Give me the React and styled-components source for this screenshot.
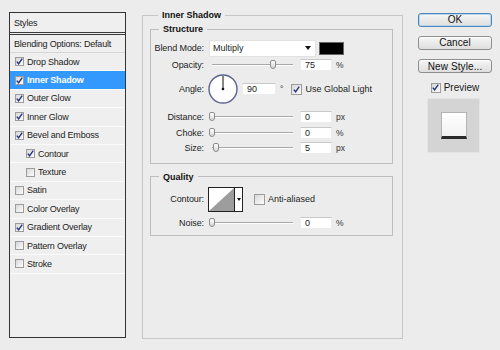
import React from "react";
import styled, {createGlobalStyle} from "styled-components";

const GlobalStyle = createGlobalStyle`
  html, body {
    margin: 0;
    padding: 0;
    background: #ececec;
  }
  body {
    font-family: "Liberation Sans", Arial, sans-serif;
    font-size: 9px;
    color: #1c1c1c;
  }
`;

const Page = styled.div`
  width: 500px;
  height: 350px;
  box-sizing: border-box;
  display: flex;
  align-items: flex-start;
  padding: 9px 0 0 9px;
`;

/* ---------- left styles list ---------- */

const StyleList = styled.div`
  margin-top: 3px;
  width: 117px;
  height: 326px;
  box-sizing: border-box;
  border: 1px solid #333;
  background: #efefef;
  letter-spacing: -0.2px;
`;

const ListHeader = styled.div`
  height: 19px;
  display: flex;
  align-items: center;
  padding-left: 4px;
  border-bottom: 3px double #3a3a3a;
`;

const BlendRow = styled.div`
  height: 17px;
  display: flex;
  align-items: center;
  padding-left: 4px;
  border-bottom: 1px solid #d6d6d6;
`;

const Item = styled.div`
  height: 17.4px;
  display: flex;
  align-items: center;
  padding-left: ${p => (p.$indent ? '16px' : '5px')};
  border-bottom: 1px solid #fafafa;
  background: ${p => (p.$active ? '#3399ff' : 'transparent')};
  color: ${p => (p.$active ? '#fff' : '#1c1c1c')};
  font-weight: ${p => (p.$active ? 'bold' : 'normal')};
`;

const Box = styled.span`
  width: 9px;
  height: 9px;
  box-sizing: border-box;
  flex: none;
  display: inline-flex;
  align-items: center;
  justify-content: center;
  border: 1px solid #9c9c9c;
  background: linear-gradient(135deg, #d8d8d8, #fdfdfd);
  margin-right: ${p => p.$gap || 3}px;
  margin-left: ${p => p.$ml || 0}px;
`;

const Check = ({on, gap, ml, size}) => (
    <Box $gap={gap} $ml={ml} style={size ? {width: size, height: size} : null}>
        {on && (
            <svg width="7" height="7" viewBox="0 0 7 7">
                <path d="M0.8 3.6 L2.6 5.8 L6.2 0.6" fill="none" stroke="#24347e" strokeWidth="1.4"/>
            </svg>
        )}
    </Box>
);

const styles = [
    {label: 'Drop Shadow', on: true},
    {label: 'Inner Shadow', on: true, active: true},
    {label: 'Outer Glow', on: true},
    {label: 'Inner Glow', on: true},
    {label: 'Bevel and Emboss', on: true},
    {label: 'Contour', on: true, indent: true},
    {label: 'Texture', on: false, indent: true},
    {label: 'Satin', on: false},
    {label: 'Color Overlay', on: false},
    {label: 'Gradient Overlay', on: true},
    {label: 'Pattern Overlay', on: false},
    {label: 'Stroke', on: false},
];

/* ---------- centre group boxes ---------- */

const Group = styled.fieldset`
  margin: 0 0 0 16px;
  min-width: 0;
  width: 261px;
  height: 330px;
  box-sizing: border-box;
  padding: 2px 9px 0 7px;
  border: 1px solid #c6c6c6;
`;

const SubGroup = styled.fieldset`
  margin: ${p => p.$mt || 0}px 0 0 0;
  min-width: 0;
  padding: ${p => p.$pt}px 0 ${p => p.$pb}px 0;
  border: 1px solid #bdbdbd;
`;

const Legend = styled.legend`
  font-weight: bold;
  font-size: 9px;
  line-height: 12px;
  padding: 0 4px;
  margin-left: 8px;
  color: #111;
`;

const Row = styled.div`
  display: flex;
  align-items: center;
  height: ${p => p.$h}px;
  margin-top: ${p => p.$mt || 0}px;
`;

const Label = styled.span`
  width: 57px;
  flex: none;
  box-sizing: border-box;
  padding-right: 4px;
  text-align: right;
  letter-spacing: -0.1px;
`;

const Select = styled.div`
  width: 107px;
  height: 17px;
  margin-left: 1px;
  box-sizing: border-box;
  background: #fff;
  border: 1px solid #e2e2e2;
  display: flex;
  align-items: center;
  justify-content: space-between;
  padding: 0 4px 0 3px;
`;

const Arrow = styled.span`
  width: 0;
  height: 0;
  border-left: 3.5px solid transparent;
  border-right: 3.5px solid transparent;
  border-top: 4px solid #111;
`;

const Swatch = styled.div`
  width: 25px;
  height: 13px;
  margin-left: 3px;
  box-sizing: border-box;
  background: #000;
  border: 1px solid #666;
`;

const Track = styled.div`
  position: relative;
  width: 88px;
  height: 12px;
  flex: none;
  &::before {
    content: "";
    position: absolute;
    left: 4px;
    right: 3px;
    top: 5px;
    height: 1px;
    background: #a8a8a8;
    box-shadow: 0 1px 0 #fdfdfd;
  }
`;

const Thumb = styled.span`
  position: absolute;
  top: 1px;
  width: 6px;
  height: 9px;
  margin-left: -3px;
  box-sizing: border-box;
  border: 1px solid #8c8c8c;
  border-radius: 2px 2px 3px 3px;
  background: linear-gradient(#ffffff, #d6d6d6);
`;

const Slider = ({value}) => (
    <Track>
        <Thumb style={{left: 4 + value * 0.81}}/>
    </Track>
);

const Input = styled.div`
  width: ${p => p.$w || 32}px;
  height: 12px;
  margin-left: 4px;
  box-sizing: border-box;
  background: #fff;
  border: 1px solid #ececec;
  border-top-color: #c9c9c9;
  display: flex;
  align-items: center;
  padding-left: 4px;
`;

const Unit = styled.span`
  margin-left: 4px;
  color: #333;
  font-size: 8.5px;
`;

const Dial = () => (
    <svg width="30" height="30" viewBox="0 0 30 30">
        <circle cx="15" cy="15" r="14" fill="#fff" stroke="#5c6290" strokeWidth="1.4"/>
        <line x1="15" y1="15" x2="15" y2="2" stroke="#111" strokeWidth="1"/>
        <circle cx="15" cy="15" r="1.3" fill="#111"/>
    </svg>
);

const ContourBox = styled.div`
  display: flex;
  width: 35px;
  height: 25px;
  box-sizing: border-box;
  border: 1px solid #222;
  background: #fff;
`;

const ContourDrop = styled.div`
  flex: 1;
  border-left: 1px solid #222;
  display: flex;
  align-items: center;
  justify-content: center;
`;

const SmallArrow = styled(Arrow)`
  border-left-width: 2.5px;
  border-right-width: 2.5px;
  border-top-width: 3px;
`;

/* ---------- right buttons ---------- */

const Side = styled.div`
  margin: 3.7px 0 0 15px;
  width: 74px;
  display: flex;
  flex-direction: column;
  font-size: 10px;
`;

const Button = styled.div`
  height: 14px;
  box-sizing: border-box;
  margin-bottom: 9.3px;
  border: 1px solid ${p => (p.$primary ? '#4a86b8' : '#8e8e8e')};
  border-radius: 3px;
  background: linear-gradient(#f6f6f6, #dedede);
  box-shadow: ${p => (p.$primary ? 'inset 0 0 0 1px #b9d6ee' : 'inset 0 1px 0 #fff')};
  display: flex;
  align-items: center;
  justify-content: center;
  color: #111;
  letter-spacing: 0.1px;
`;

const PreviewRow = styled.div`
  display: flex;
  align-items: center;
  justify-content: center;
  height: 10px;
  margin-top: 0;
`;

const PreviewBox = styled.div`
  width: 53px;
  height: 55px;
  margin: 5px 0 0 9px;
  box-sizing: border-box;
  background: #d4d4d4;
  border: 1px solid #e4e4e4;
  display: flex;
  align-items: center;
  justify-content: center;
`;

const PreviewSquare = styled.div`
  width: 26px;
  height: 27px;
  box-sizing: border-box;
  background: linear-gradient(#ffffff, #f2f2f2);
  border: 1px solid #b4b4b4;
  border-bottom: 3px solid #2a2a2a;
`;

export default function App() {
    return (
        <>
            <GlobalStyle/>
            <Page>
                <StyleList>
                    <ListHeader>Styles</ListHeader>
                    <BlendRow>Blending Options: Default</BlendRow>
                    {styles.map(s => (
                        <Item key={s.label} $active={s.active} $indent={s.indent}>
                            <Check on={s.on}/>
                            {s.label}
                        </Item>
                    ))}
                </StyleList>

                <Group>
                    <Legend>Inner Shadow</Legend>
                    <SubGroup $pt={4.5} $pb={8}>
                        <Legend>Structure</Legend>
                        <Row $h={17}>
                            <Label>Blend Mode:</Label>
                            <Select>Multiply<Arrow/></Select>
                            <Swatch/>
                        </Row>
                        <Row $h={13} $mt={2}>
                            <Label>Opacity:</Label>
                            <Slider value={75}/>
                            <Input>75</Input>
                            <Unit>%</Unit>
                        </Row>
                        <Row $h={30} $mt={2.5}>
                            <Label>Angle:</Label>
                            <Dial/>
                            <Input $w={34}>90</Input>
                            <Unit>°</Unit>
                            <Check on gap={3} ml={8} size={11}/>
                            <span>Use Global Light</span>
                        </Row>
                        <Row $h={14} $mt={6}>
                            <Label>Distance:</Label>
                            <Slider value={0}/>
                            <Input>0</Input>
                            <Unit>px</Unit>
                        </Row>
                        <Row $h={14} $mt={2}>
                            <Label>Choke:</Label>
                            <Slider value={0}/>
                            <Input>0</Input>
                            <Unit>%</Unit>
                        </Row>
                        <Row $h={14} $mt={1}>
                            <Label>Size:</Label>
                            <Slider value={5}/>
                            <Input>5</Input>
                            <Unit>px</Unit>
                        </Row>
                    </SubGroup>

                    <SubGroup $mt={6.5} $pt={4} $pb={5}>
                        <Legend>Quality</Legend>
                        <Row $h={25}>
                            <Label>Contour:</Label>
                            <ContourBox>
                                <svg width="25" height="23" viewBox="0 0 25 23">
                                    <polygon points="0,23 25,0 25,23" fill="#9d9d9d"/>
                                </svg>
                                <ContourDrop><SmallArrow/></ContourDrop>
                            </ContourBox>
                            <Check gap={3} ml={11} size={11}/>
                            <span>Anti-aliased</span>
                        </Row>
                        <Row $h={14} $mt={4}>
                            <Label>Noise:</Label>
                            <Slider value={0}/>
                            <Input>0</Input>
                            <Unit>%</Unit>
                        </Row>
                    </SubGroup>
                </Group>

                <Side>
                    <Button $primary>OK</Button>
                    <Button>Cancel</Button>
                    <Button>New Style...</Button>
                    <PreviewRow>
                        <Check on gap={3} size={10}/>
                        Preview
                    </PreviewRow>
                    <PreviewBox>
                        <PreviewSquare/>
                    </PreviewBox>
                </Side>
            </Page>
        </>
    );
}
